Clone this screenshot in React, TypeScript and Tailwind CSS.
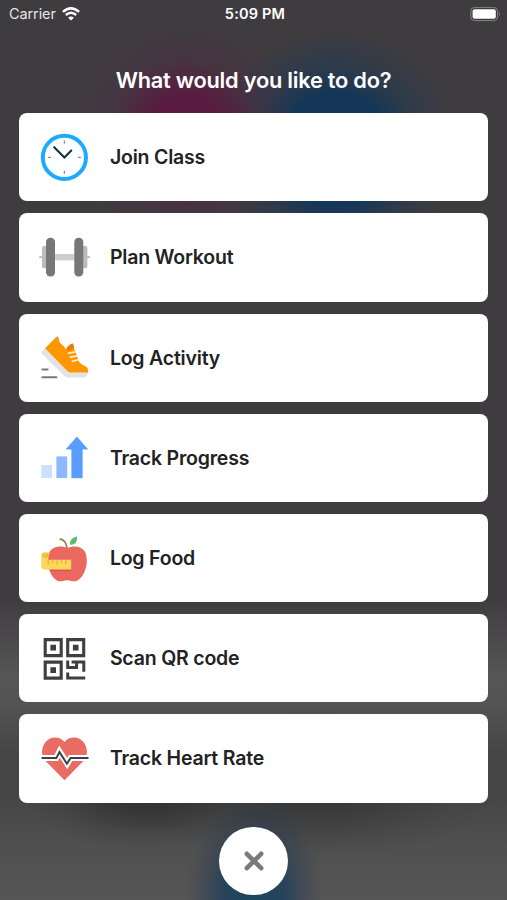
import React from "react";

interface ActionItemProps {
  label: string;
  children: React.ReactNode;
}

const ClockIcon = () => (
  <>
    <circle cx="34.4" cy="32.4" r="21.6" fill="#fdfeff" stroke="#1aabff" strokeWidth="3.9" />
    <path
      d="M34.4 15.4v3M34.4 45.8v3M18 32.4h3M47.9 32.4h3"
      stroke="#8d8d8d"
      strokeWidth="1.3"
    />
    <path
      d="M24.2 22.2L34.4 32.4L41.3 25.5"
      fill="none"
      stroke="#143436"
      strokeWidth="2.1"
      strokeLinecap="round"
    />
  </>
);

const DumbbellIcon = () => (
  <>
    <path d="M10 32.2h49.4" stroke="#b5b5b5" strokeWidth="1.8" strokeLinecap="round" />
    <rect x="24" y="29" width="21" height="6.4" fill="#cdcdcd" />
    <rect x="12" y="21" width="8" height="22.2" rx="1.8" fill="#bcbcbc" />
    <rect x="49.4" y="21" width="8" height="22.2" rx="1.8" fill="#bcbcbc" />
    <rect x="16" y="12.8" width="9" height="38.6" rx="4.2" fill="#777" />
    <rect x="44.3" y="12.8" width="9" height="38.6" rx="4.2" fill="#777" />
  </>
);

const ShoeIcon = () => (
  <>
    <path
      d="M11.6 27L15 23L38.5 46.3H58.2Q58 52.4 53 52.4H39Q36 52.4 34 50.4L12 29Q11 28 11.6 27Z"
      fill="#e2e4e4"
    />
    <path d="M35.8 25.5Q37 20 42.6 18.2L44 21V27L40 29Z" fill="#ef7c00" />
    <path
      d="M15 23.3L26.3 11.9Q27.8 10.7 28.6 12.8C29.2 17.2 30.6 19 32.4 20C35 21.4 35 23.8 36.6 25C38.6 26.6 42 25.4 43.8 22.6L48.6 35.6C49.9 39 52.4 39.6 55 41Q58.6 42.7 58.2 47.4H41Q38.8 47.4 37.3 45.9Z"
      fill="#ff9800"
    />
    <path
      d="M38.7 28.2L44.9 27M40.3 32.2L46.7 31M42.3 36.4L48 34.8"
      stroke="#fff1dc"
      strokeWidth="1.7"
      strokeLinecap="round"
    />
    <path
      d="M12.4 44.4h5.2M12.4 52.2h14"
      stroke="#6d7c84"
      strokeWidth="2"
      strokeLinecap="round"
    />
  </>
);

const ProgressIcon = () => (
  <>
    <rect x="11.2" y="40" width="10.9" height="13" fill="#cce0ff" />
    <rect x="26.4" y="31.4" width="10.8" height="21.6" fill="#8bb9ff" />
    <path
      d="M46.9 11.8L57.8 24.2H52.4V53H41.6V24.2H36Z"
      fill="#599cff"
      stroke="#599cff"
      strokeWidth=".4"
      strokeLinejoin="round"
    />
  </>
);

const AppleIcon = () => (
  <>
    <path
      d="M37.5 22C30 19 19 20 17.7 32C17 42 21.5 52 27.5 54.7C31.5 56.3 34.5 54 37.3 54.2C40 54 43 56.3 47 54.7C53 52 57.6 42 56.7 32C55.4 20 45.5 19 37.5 22Z"
      fill="#ea6860"
    />
    <path d="M19.5 43.5h22v1.4h-21z" fill="#d9534f" />
    <path d="M29.7 12.8Q36.3 14 37 22" fill="none" stroke="#a27a55" strokeWidth="1.7" />
    <path d="M40.2 18.8C39.4 14.2 42.5 11.4 47 10.6C47.3 15.6 45.3 19.2 40.2 18.8Z" fill="#5cb970" />
    <path
      d="M14.5 26.3H20Q18.2 29.5 18.2 33.8H41.2V43.6H14.5Q11.3 43.6 11.3 40.6V29.8Q11.3 26.3 14.5 26.3Z"
      fill="#ffd55a"
    />
    <ellipse cx="15.6" cy="29.6" rx="3.3" ry="2.4" fill="#e9bf48" />
    <path
      d="M18.2 34.4v4.2M22.6 34.4v2.8M27 34.4v4M31.4 34.4v2.8M35.8 34.4v4"
      stroke="#d5a844"
      strokeWidth="1"
    />
  </>
);

const QrIcon = () => (
  <>
    <path
      d="M15.2 13.6h16v16h-16zM37.7 13.6h16v16h-16zM15.2 36.1h16v16h-16z"
      fill="none"
      stroke="#3f3f3f"
      strokeWidth="3.1"
    />
    <path
      d="M20.4 18.8H26v5.6h-5.6zM42.9 18.8h5.6v5.6h-5.6zM20.4 41.3H26v5.6h-5.6z"
      fill="#3f3f3f"
    />
    <path
      d="M37.7 34.6v6.8h8.9v-5.3M41.6 36.1h12.2v9.7M37.7 46.6v5.5h17.5"
      fill="none"
      stroke="#3f3f3f"
      strokeWidth="3"
    />
  </>
);

const HeartIcon = () => (
  <>
    <path
      d="M34.5 54.2L15.6 35C10.5 29 11.5 22 14.8 17C20 10 29.5 10 34.5 16C39.5 10 49 10 54.2 17C57.5 22 58.5 29 53.4 35Z"
      fill="#ea6b61"
    />
    <path
      d="M11 32h15.2l3.3-6.4l7.7 12l3.4-5.6h17.8"
      fill="none"
      stroke="#fff"
      strokeWidth="6"
    />
    <path
      d="M12.3 32.1h14l3.2-6l7.4 11.6l3.6-5.6h17.3"
      fill="none"
      stroke="#3b4245"
      strokeWidth="2"
      strokeLinecap="round"
    />
  </>
);

const ActionItem = ({ label, children }: ActionItemProps) => {
  return (
    <button className="flex h-[88.1px] w-full items-center rounded-[8px] bg-white pl-[10.7px] text-left">
      <svg viewBox="0 0 70 65" className="h-[65px] w-[70px] shrink-0">
        {children}
      </svg>
      <span className="ml-[10px] pt-px text-[19.5px] font-[560] tracking-[-0.2px] text-[#222]">
        {label}
      </span>
    </button>
  );
};

const StatusBar = () => {
  return (
    <div className="grid h-7 grid-cols-3 items-center pr-[6px] pl-[9px] text-[14.5px] text-white">
      <div className="flex items-center gap-[6px] text-[#e4e4e4]">
        <span className="tracking-[-0.1px]">Carrier</span>
        <svg viewBox="0 0 18 14" className="h-[14px] w-[18px]" fill="none" stroke="#fff">
          <path d="M.9 4.9Q9-2.1 17.1 4.9" strokeWidth="2.5" />
          <path d="M3.8 8Q9 3.6 14.2 8" strokeWidth="2.3" />
          <path d="M9 13.6L6.1 10.7Q9 8.3 11.9 10.7Z" fill="#fff" stroke="none" />
        </svg>
      </div>
      <span className="text-center font-[560] tracking-[0.2px] whitespace-nowrap">5:09 PM</span>
      <svg viewBox="0 0 31 15" className="h-[15px] w-[31px] justify-self-end">
        <rect x=".8" y=".4" width="26.8" height="13.2" rx="3.8" fill="none" stroke="#858386" />
        <rect x="2.6" y="2.2" width="23.2" height="9.6" rx="2" fill="#fff" />
        <path d="M29 4.7q1.8 2.3 0 4.6z" fill="#858386" />
      </svg>
    </div>
  );
};

const App = () => {
  return (
    <div className="h-[900px] w-[507px] overflow-hidden bg-[radial-gradient(circle_at_187px_135px,#60133fee_0px,#5c1741dd_40px,#50294166_75px,transparent_112px),radial-gradient(circle_at_335px_150px,#113760_0px,#123659f5_55px,#1d395488_82px,transparent_120px),radial-gradient(ellipse_68px_100px_at_254px_895px,#1b4661_0%,#24425bee_45%,#2b3d5366_72%,transparent_100%),radial-gradient(ellipse_120px_60px_at_145px_790px,#2c2c2c_0%,#30303099_45%,#3a3a3a44_75%,transparent_100%),radial-gradient(ellipse_190px_75px_at_310px_785px,#323232_0%,#36363688_50%,#3c3c3c33_78%,transparent_100%),linear-gradient(180deg,#3f3c40_0px,#3f3c40_600px,#464446_620px,#555_675px,#535353_705px,#454545_755px,#464646_800px,#505050_850px,#555_900px)] font-['Inter','Liberation_Sans',sans-serif]">
      <StatusBar />
      <h1 className="mt-[36px] h-8 text-center text-[21.8px] leading-8 font-[560] tracking-[-0.24px] text-white">
        What would you like to do?
      </h1>
      <div className="mx-[19.2px] mt-[17.3px] flex flex-col gap-[12.1px]">
        <ActionItem label="Join Class">
          <ClockIcon />
        </ActionItem>
        <ActionItem label="Plan Workout">
          <DumbbellIcon />
        </ActionItem>
        <ActionItem label="Log Activity">
          <ShoeIcon />
        </ActionItem>
        <ActionItem label="Track Progress">
          <ProgressIcon />
        </ActionItem>
        <ActionItem label="Log Food">
          <AppleIcon />
        </ActionItem>
        <ActionItem label="Scan QR code">
          <QrIcon />
        </ActionItem>
        <ActionItem label="Track Heart Rate">
          <HeartIcon />
        </ActionItem>
      </div>
      <button
        aria-label="Close"
        className="mx-auto mt-[24.4px] flex size-[68.5px] items-center justify-center rounded-full bg-white"
      >
        <svg viewBox="0 0 20 20" className="size-5">
          <path
            d="M2.8 2.8l14.4 14.4M17.2 2.8l-14.4 14.4"
            stroke="#7a7a7a"
            strokeWidth="4.6"
            strokeLinecap="round"
          />
        </svg>
      </button>
    </div>
  );
};

export default App;
